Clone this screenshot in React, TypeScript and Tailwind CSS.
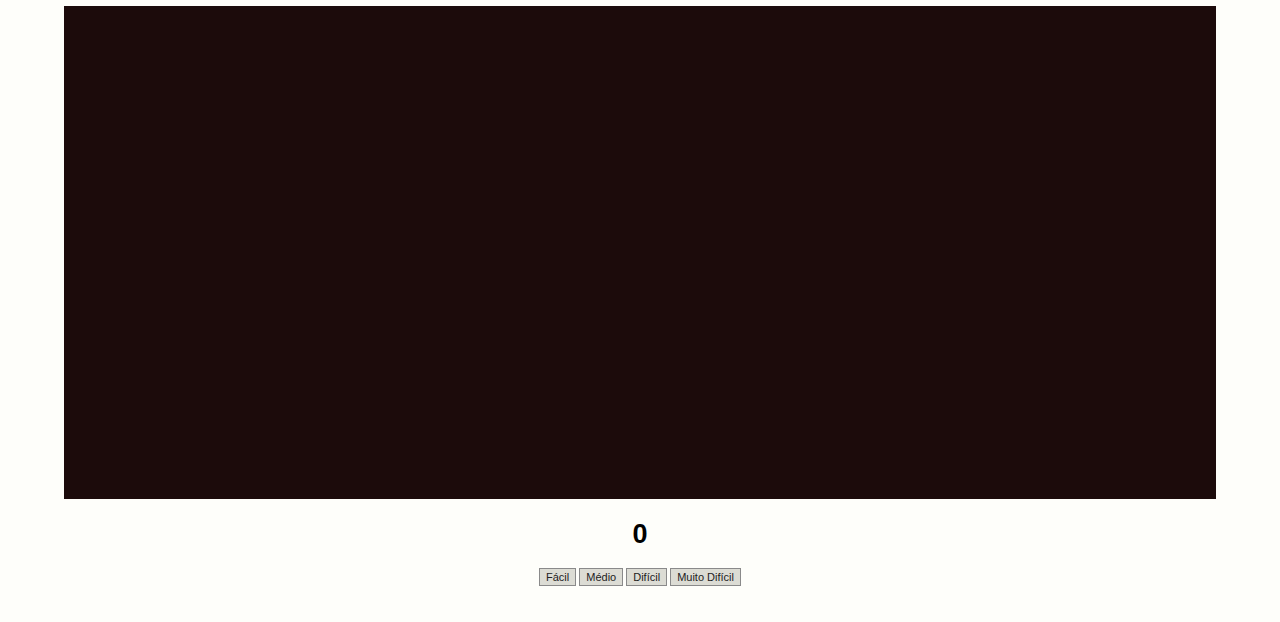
export default function App() {
  const levels = ['Fácil', 'Médio', 'Difícil', 'Muito Difícil'];
  return (
    <div className="min-h-[622px] w-full bg-[#fefefa] flex flex-col items-center pt-[6px]" style={{ fontFamily: '"Liberation Sans", Arial, sans-serif' }}>
      <div className="w-[1152px] h-[493px] bg-[#1c0b0b]" />
      <div className="mt-[20px] text-[27px] leading-[30px] font-bold text-black">0</div>
      <div className="mt-[19px] flex gap-[3px]">
        {levels.map((l) => (
          <button
            key={l}
            className="h-[18px] px-[6px] text-[11px] leading-[14px] text-[#222] bg-[#dcdcd4] border border-[#8a8a8a]"
          >
            {l}
          </button>
        ))}
      </div>
    </div>
  );
}
